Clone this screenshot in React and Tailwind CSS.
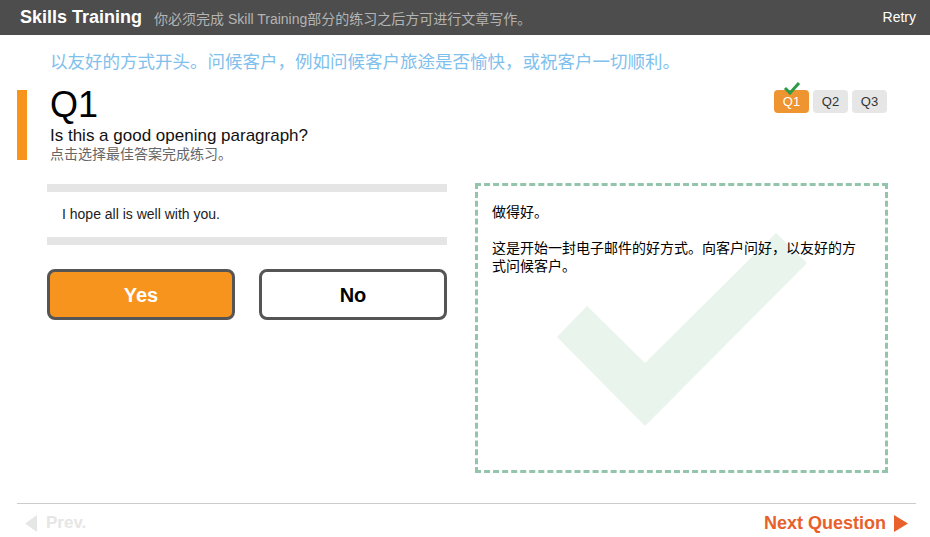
import React from "react";

const sans = { fontFamily: '"Liberation Sans", Arial, "Noto Sans CJK SC", sans-serif' };

const QBadge = ({ label, active, done }) => (
  <div
    className={`relative w-[35px] h-[23px] rounded-[4px] flex items-center justify-center text-[13px] ${
      active ? "bg-[#ee9430] text-white" : "bg-[#e6e6e6] text-[#333]"
    }`}
  >
    {done && (
      <svg className="absolute left-[9px] top-[-9px]" width="18" height="14" viewBox="0 0 18 14">
        <path d="M2 7 L7 12 L16 2" fill="none" stroke="#2e9a47" strokeWidth="3" />
      </svg>
    )}
    {label}
  </div>
);

export default function App() {
  return (
    <div className="w-[930px] h-[537px] bg-white flex flex-col overflow-hidden" style={sans}>
      {/* header */}
      <div className="shrink-0 h-[35px] bg-[#4d4d4d] flex items-center pl-[20px] pr-[14px]">
        <span className="text-white font-bold text-[18px]">Skills Training</span>
        <span className="ml-[12px] text-[#b4b4b4] text-[14px] mt-[3px]">
          你必须完成 Skill Training部分的练习之后方可进行文章写作。
        </span>
        <span className="ml-auto text-white text-[14px]">Retry</span>
      </div>

      <div className="shrink-0 pl-[50px] mt-[15px] h-[24px] text-[17.5px] leading-[24px] text-[#7fc0ec]">
        以友好的方式开头。问候客户，例如问候客户旅途是否愉快，或祝客户一切顺利。
      </div>

      {/* question heading */}
      <div className="shrink-0 mt-[16px] flex items-start pr-[43px]">
        <div className="ml-[17px] w-[10px] h-[70px] bg-[#f7941e]" />
        <div className="ml-[23px] mt-[-2px] flex flex-col">
          <div className="text-[36px] leading-[34px] text-black">Q1</div>
          <div className="mt-[4px] text-[17px] leading-[20px] text-[#111]">Is this a good opening paragraph?</div>
          <div className="text-[14px] leading-[16px] text-[#666]">点击选择最佳答案完成练习。</div>
        </div>
        <div className="ml-auto flex gap-[4px]">
          <QBadge label="Q1" active done />
          <QBadge label="Q2" />
          <QBadge label="Q3" />
        </div>
      </div>

      {/* content */}
      <div className="shrink-0 mt-[21px] pl-[47px] flex gap-[28px]">
        <div className="w-[400px] flex flex-col">
          <div className="mt-[1px] h-[8px] bg-[#e5e5e5]" />
          <div className="h-[45px] pl-[15px] flex items-center text-[14px] text-[#222]">
            I hope all is well with you.
          </div>
          <div className="h-[8px] bg-[#e5e5e5]" />
          <div className="mt-[24px] flex justify-between">
            <button className="w-[188px] h-[51px] rounded-[8px] border-[3px] border-[#555] bg-[#f7941e] text-white font-bold text-[20px]">
              Yes
            </button>
            <button className="w-[188px] h-[51px] rounded-[8px] border-[3px] border-[#555] bg-white text-black font-bold text-[20px]">
              No
            </button>
          </div>
        </div>

        <div className="relative w-[413px] h-[290px] border-[3px] border-dashed border-[#93c5ad] px-[14px] pt-[17px] text-[14px] leading-[18px] text-black">
          <svg className="absolute left-[-3px] top-[-3px]" width="413" height="290" viewBox="475 183 413 290">
            <polygon points="557,337 587,306 645,363 776,233 807,263 645,426" fill="#e8f4ec" />
          </svg>
          <div className="relative">
            <p>做得好。</p>
            <p className="mt-[18px] w-[370px]">
              这是开始一封电子邮件的好方式。向客户问好，以友好的方式问候客户。
            </p>
          </div>
        </div>
      </div>

      {/* footer */}
      <div className="shrink-0 mt-[30px] mx-[17px] h-[1px] bg-[#cccccc] w-[899px]" />
      <div className="shrink-0 h-[38px] flex items-center pl-[25px] pr-[22px]">
        <svg width="12" height="17" viewBox="0 0 12 17">
          <polygon points="12,0 12,17 0,8.5" fill="#e6e6e6" />
        </svg>
        <span className="ml-[9px] text-[17px] font-bold text-[#e6e6e6]">Prev.</span>
        <span className="ml-auto text-[18px] font-bold text-[#e8602b]">Next Question</span>
        <svg className="ml-[8px]" width="14" height="17" viewBox="0 0 14 17">
          <polygon points="0,0 14,8.5 0,17" fill="#e8602b" />
        </svg>
      </div>
    </div>
  );
}
